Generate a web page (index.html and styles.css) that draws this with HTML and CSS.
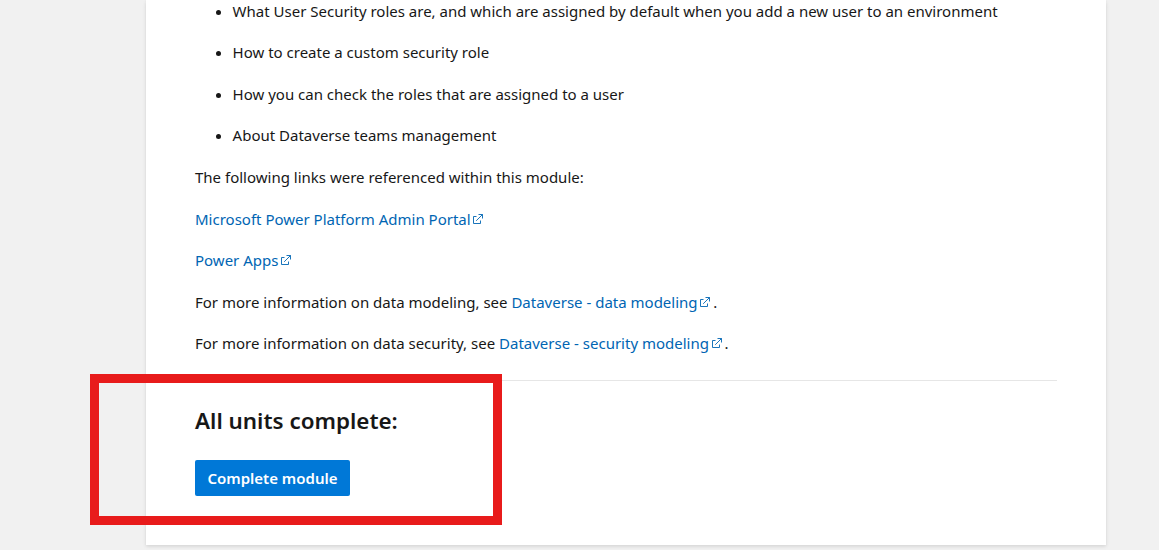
FILE: index.html
```
<!DOCTYPE html>
<html lang="en-us">
<head>
  <meta charset="utf-8" />
  <title>Summary - Training</title>
  <link rel="stylesheet" href="styles.css">
</head>
<body>
<svg class="sprite" aria-hidden="true">
  <symbol id="external" viewBox="0 0 10 10">
    <path d="M3.5 2.5H0.5V9.5H7.5V6.5M5.5 0.5H9.5V4.5M9.5 0.5L3.2 6.8" fill="none" stroke="currentColor" stroke-width="0.9" />
  </symbol>
</svg>
<main class="card">
  <div class="content">
    <ul class="topics">
      <li>What User Security roles are, and which are assigned by default when you add a new user to an environment</li>
      <li>How to create a custom security role</li>
      <li>How you can check the roles that are assigned to a user</li>
      <li>About Dataverse teams management</li>
    </ul>
    <p>The following links were referenced within this module:</p>
    <p><a href="#">Microsoft Power Platform Admin Portal<svg class="external"><use href="#external" /></svg></a></p>
    <p><a href="#">Power Apps<svg class="external"><use href="#external" /></svg></a></p>
    <p>For more information on data modeling, see <a href="#">Dataverse - data modeling<svg class="external"><use href="#external" /></svg></a>.</p>
    <p>For more information on data security, see <a href="#">Dataverse - security modeling<svg class="external"><use href="#external" /></svg></a>.</p>
  </div>
  <section class="completion">
    <h2 class="completion-title">All units complete:</h2>
    <a class="button" href="#">Complete module</a>
  </section>
</main>
<div class="highlight"></div>
</body>
</html>
```
FILE: styles.css
```
body {
  margin: 0;
  height: 550px;
  overflow: hidden;
  background: #f1f1f1;
  color: #171717;
  font-family: "Segoe UI", "Noto Sans", sans-serif;
  font-size: 15px;
  line-height: 25.6px;
}
.sprite {
  display: none;
}
.card {
  box-sizing: border-box;
  width: 960px;
  height: 545px;
  margin-left: 146px;
  padding: 0 49px;
  background: #fff;
  box-shadow: 0 1.6px 3.6px rgba(0, 0, 0, 0.13), 0 0.3px 0.9px rgba(0, 0, 0, 0.11);
  display: flow-root;
}
.topics {
  margin: -1px 0 16.6px;
  padding-left: 37.6px;
}
.topics li + li {
  margin-top: 15.8px;
}
p {
  margin: 0 0 15.8px;
}
a {
  color: #0065b3;
  text-decoration: none;
}
.external {
  width: 10px;
  height: 10px;
  margin: 0 3px 0 2.6px;
  vertical-align: 1px;
}
.completion {
  margin-top: 23px;
  padding-top: 24px;
  border-top: 1px solid #e6e6e6;
}
.completion-title {
  margin: 0 0 23px;
  font-size: 22.4px;
  font-weight: 600;
  line-height: 32px;
}
.button {
  display: inline-block;
  width: 155px;
  height: 36px;
  border-radius: 2px;
  background: #0078d7;
  color: #fff;
  font-weight: 600;
  line-height: 36px;
  text-align: center;
}
/* Red frame drawn over the completion section */
.highlight {
  position: absolute;
  top: 374.4px;
  left: 90px;
  box-sizing: border-box;
  width: 411.6px;
  height: 150.6px;
  border: 9px solid #e81b1b;
}
```
